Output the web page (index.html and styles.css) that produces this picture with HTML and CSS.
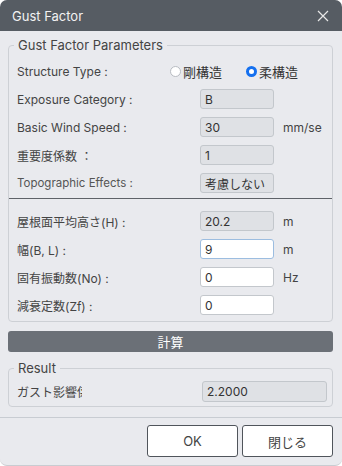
FILE: index.html
```html
<!DOCTYPE html>
<html lang="ja">

<head>
  <meta charset="UTF-8">
  <meta name="viewport" content="width=device-width, initial-scale=1.0">
  <title>Gust Factor</title>
  <link rel="stylesheet" href="styles.css">
</head>

<body>
  <div class="dialog">
    <div class="titlebar">
      <span class="title">Gust Factor</span>
      <svg class="close" width="12" height="12" viewBox="0 0 12 12">
        <path d="M1 1 L11 11 M11 1 L1 11" stroke="#e8e8e8" stroke-width="1.2" fill="none" />
      </svg>
    </div>

    <div class="content">
      <fieldset class="group">
        <legend>Gust Factor Parameters</legend>

        <div class="row radio-row">
          <span class="label">Structure Type :</span>
          <div class="radios">
            <label class="radio"><span class="dot"></span>剛構造</label>
            <label class="radio"><span class="dot checked"></span>柔構造</label>
          </div>
        </div>
        <div class="row">
          <span class="label">Exposure Category :</span>
          <input class="field" type="text" value="B" disabled>
        </div>
        <div class="row">
          <span class="label">Basic Wind Speed :</span>
          <input class="field" type="text" value="30" disabled>
          <span class="unit">mm/se</span>
        </div>
        <div class="row">
          <span class="label">重要度係数 ：</span>
          <input class="field" type="text" value="1" disabled>
        </div>
        <div class="row">
          <span class="label small">Topographic Effects :</span>
          <input class="field" type="text" value="考慮しない" disabled>
        </div>

        <div class="divider"></div>

        <div class="row">
          <span class="label">屋根面平均高さ(H) :</span>
          <input class="field" type="text" value="20.2" disabled>
          <span class="unit">m</span>
        </div>
        <div class="row">
          <span class="label">幅(B, L) :</span>
          <input class="field active" type="text" value="9">
          <span class="unit">m</span>
        </div>
        <div class="row">
          <span class="label">固有振動数(No) :</span>
          <input class="field" type="text" value="0">
          <span class="unit">Hz</span>
        </div>
        <div class="row">
          <span class="label">減衰定数(Zf) :</span>
          <input class="field" type="text" value="0">
        </div>
      </fieldset>

      <button class="calc">計算</button>

      <fieldset class="group result">
        <legend>Result</legend>
        <div class="result-row">
          <span class="label clip">ガスト影響係数</span>
          <input class="field wide" type="text" value="2.2000" disabled>
        </div>
      </fieldset>
    </div>

    <div class="footer">
      <button class="btn">OK</button>
      <button class="btn">閉じる</button>
    </div>
  </div>
</body>

</html>
```

FILE: styles.css
```css
body {
  margin: 0;
  background-color: #fff;
  font-family: Inter, "Noto Sans CJK JP", sans-serif;
  font-size: 12px;
  color: #444;
}

.dialog {
  height: 466px;
  box-sizing: border-box;
  display: flex;
  flex-direction: column;
  background-color: #e9eaee;
  border-radius: 7px;
  overflow: hidden;
  border-bottom: 1px solid #c9ccd1;
}

.titlebar {
  height: 31px;
  flex-shrink: 0;
  display: flex;
  align-items: center;
  justify-content: space-between;
  padding: 0 12px;
  background-color: #565c63;
}

.title {
  color: #f2f2f2;
  font-size: 13px;
}

.close {
  margin-right: 1px;
}

.content {
  padding: 6px 9px 0 8px;
  display: flex;
  flex-direction: column;
}

.group {
  margin: 0;
  padding: 4px 0 2px;
  border: 1px solid #cdd0d5;
  border-radius: 4px;
}

.group legend {
  margin-left: 5px;
  padding: 0 4px;
  font-size: 13px;
  line-height: 16px;
  color: #444;
}

.row {
  display: grid;
  grid-template-columns: 183px 74px auto;
  align-items: center;
  height: 28px;
  padding: 0 8px;
}

.row.radio-row {
  grid-template-columns: 153px auto;
}

.label {
  white-space: nowrap;
  color: #444;
}

.label.small {
  font-size: 11.5px;
  color: #555;
}

.radios {
  display: flex;
  gap: 24px;
}

.radio {
  display: flex;
  align-items: center;
  gap: 2px;
  white-space: nowrap;
  font-size: 13px;
  color: #333;
}

.dot {
  width: 11px;
  height: 11px;
  box-sizing: border-box;
  border-radius: 50%;
  border: 1px solid #b8bcc2;
  background-color: #fff;
}

.dot.checked {
  border: 3px solid #1570ef;
}

.field {
  box-sizing: border-box;
  width: 74px;
  height: 20px;
  margin: 0;
  padding: 0 4px;
  font-family: inherit;
  font-size: 12px;
  color: #333;
  background-color: #dfe1e5;
  border: 1px solid #c3c7cc;
  border-radius: 3px;
}

.field:not(:disabled) {
  background-color: #fff;
  border-color: #c3c7cc;
}

.field.active {
  border-color: #9cbde0;
}

.unit {
  margin-left: 9px;
  color: #444;
}

.divider {
  height: 1px;
  margin: 1px 0 8px;
  background-color: #5e6268;
}

.calc {
  margin-top: 9px;
  height: 21px;
  padding: 0;
  border: none;
  border-radius: 3px;
  background-color: #6b7077;
  color: #fff;
  font-family: inherit;
  font-size: 13px;
}

.result {
  margin-top: 8px;
  padding: 5px 0 4px;
}

.result-row {
  display: flex;
  align-items: center;
  justify-content: space-between;
  padding: 0 5px 0 8px;
}

.label.clip {
  width: 65px;
  overflow: hidden;
}

.field.wide {
  width: 125px;
  height: 21px;
}

.footer {
  margin-top: 10px;
  border-top: 1px solid #c8ccd2;
  display: flex;
  justify-content: flex-end;
  gap: 4px;
  padding: 7px 9px 0;
}

.btn {
  width: 91px;
  height: 32px;
  background-color: #fff;
  border: 1px solid #50555b;
  border-radius: 3px;
  font-family: inherit;
  font-size: 13px;
  color: #444;
}
```
